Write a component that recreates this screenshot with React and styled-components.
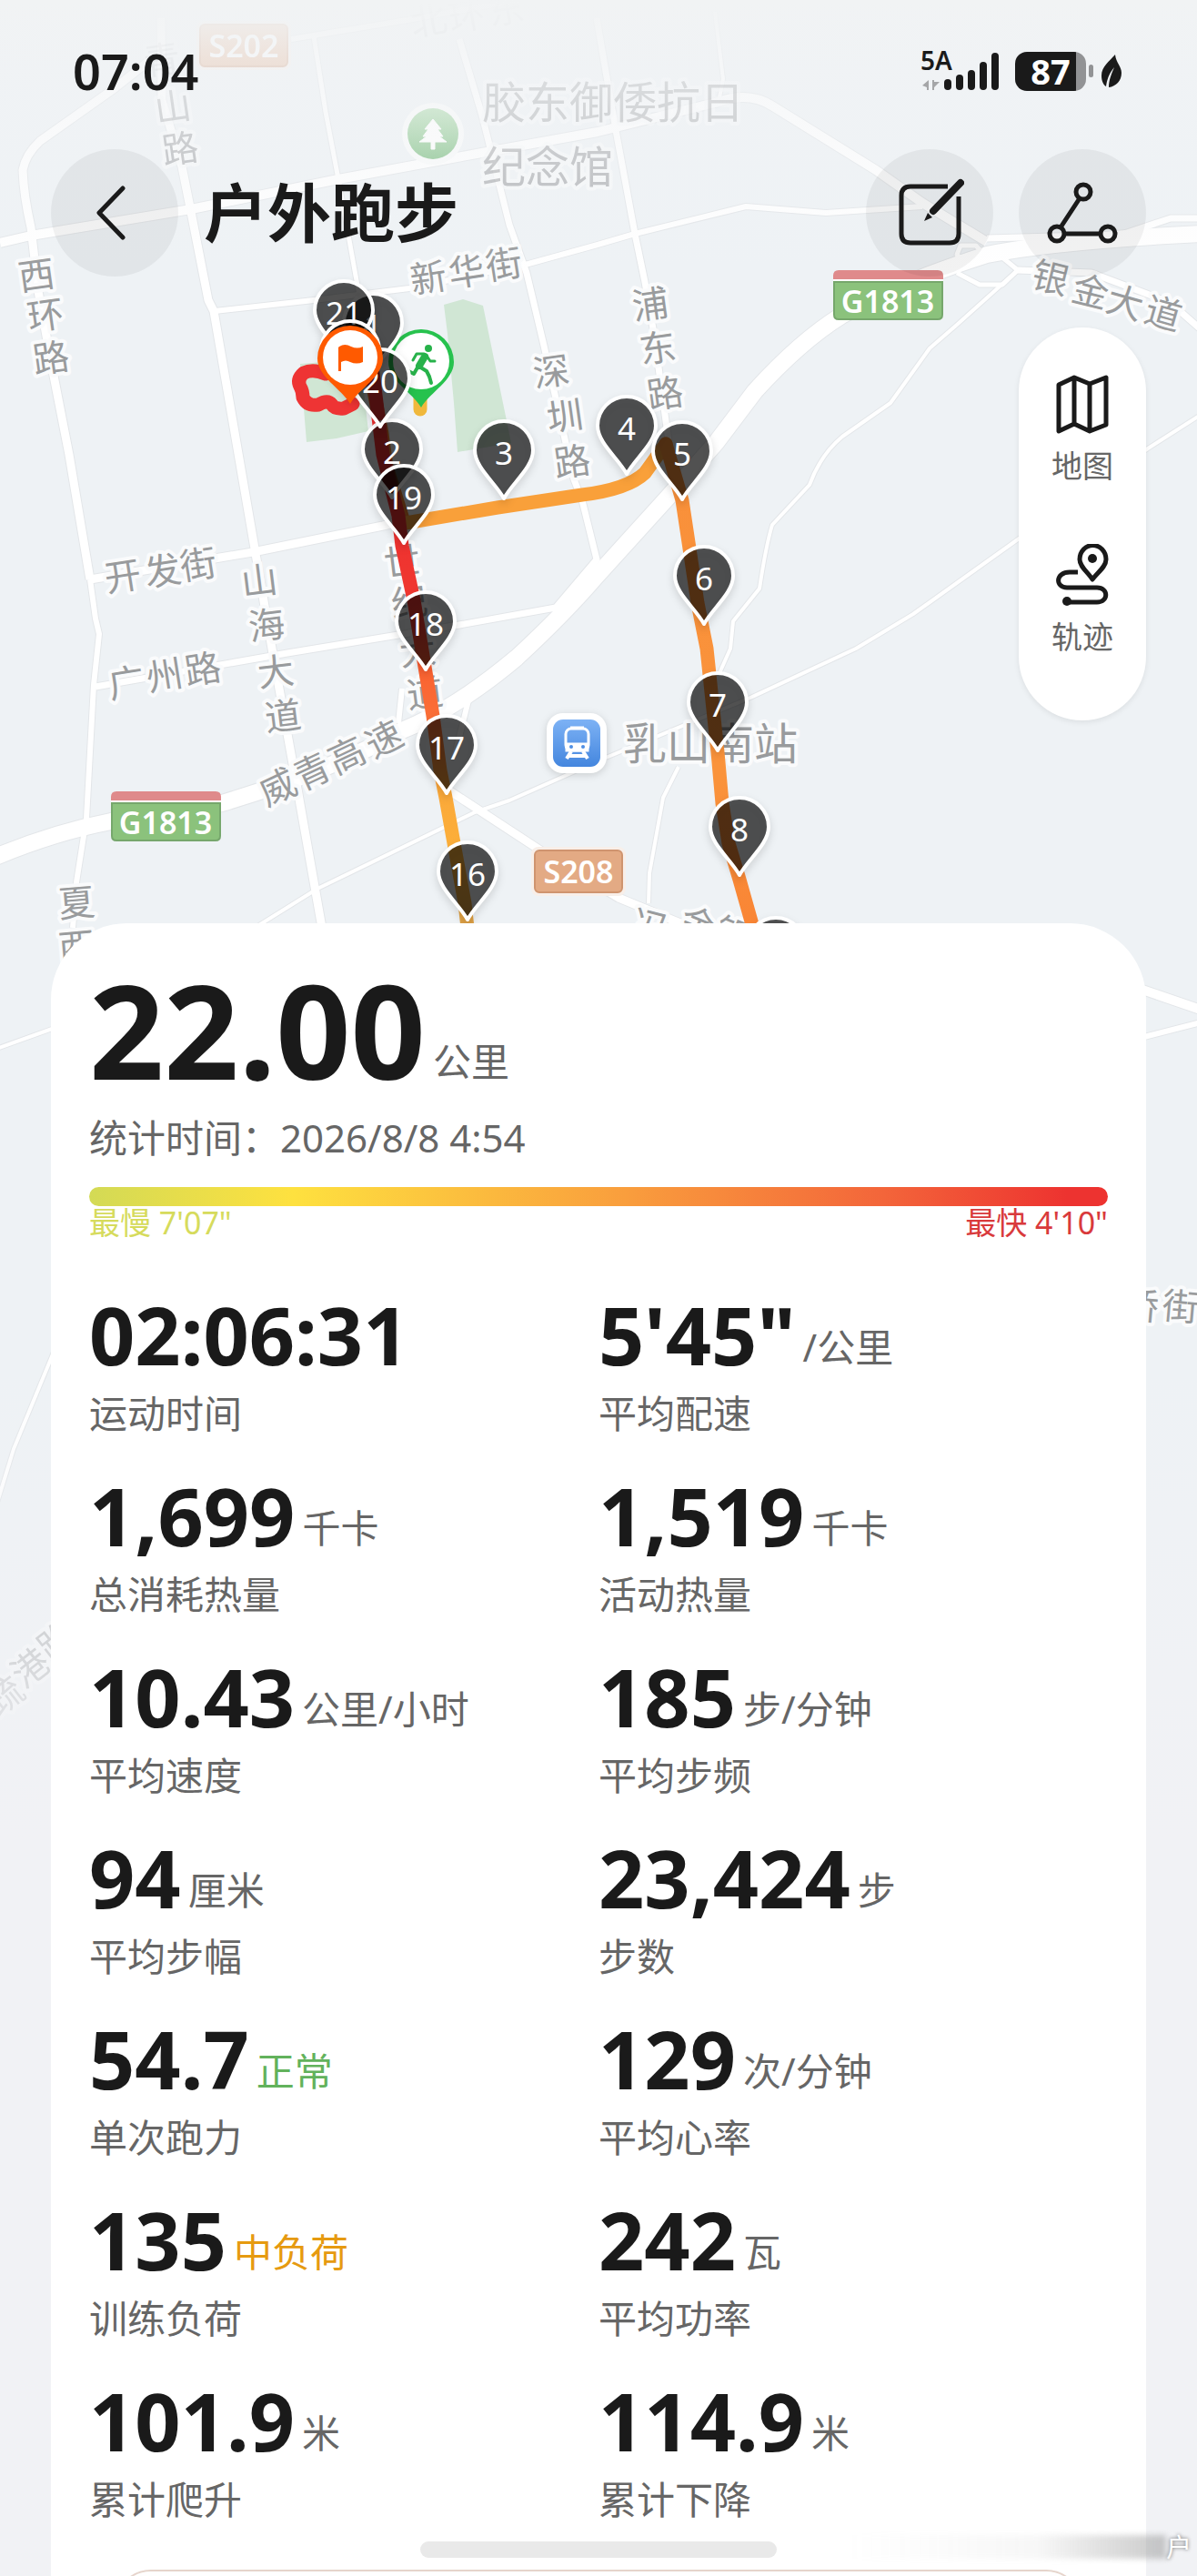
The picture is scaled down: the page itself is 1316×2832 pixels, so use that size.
import React from "react";
import styled, { createGlobalStyle } from "styled-components";

const GlobalStyle = createGlobalStyle`
  * {
    box-sizing: border-box;
  }

  body {
    margin: 0;
    background: #f1f2f5;
    color: #1a1a1a;
    font-family: "Noto Sans", "Noto Sans CJK SC", sans-serif;
  }

  button {
    border: 0;
    padding: 0;
    color: inherit;
    font-family: inherit;
    cursor: pointer;
  }
`;

const Page = styled.main`
  position: relative;
  display: flex;
  flex-direction: column;
  height: 100vh;
  overflow: hidden;
`;

/* map backdrop */

const MapSvg = styled.svg`
  position: absolute;
  top: 0;
  left: 0;
  width: 100%;
  height: auto;
`;

const MapText = styled.text`
  font-size: ${(props) => props.$size || 40}px;
  font-weight: ${(props) => props.$weight || 400};
  fill: ${(props) => props.$color || "#999b9d"};
  stroke: ${(props) => props.$halo || "#fafbfc"};
  stroke-width: ${(props) => (props.$halo === "none" ? 0 : 8)}px;
  stroke-linejoin: round;
  paint-order: stroke;
  text-anchor: ${(props) => props.$anchor || "middle"};
`;

const PinShape = styled.path`
  fill: rgba(0, 0, 0, 0.65);
  stroke: #fff;
  stroke-width: 4px;
  stroke-linejoin: round;
  filter: drop-shadow(0 4px 4px rgba(0, 0, 0, 0.15));
`;

const roads = [
  { w: 9, d: "M177 20L178 110L200 183L210 233L229 330L235 342L280 603L299 713L316 807L328 873L354 1020" },
  { w: 9, d: "M165 66L126 97L44 155Q28 170 25 187Q26 215 34 250L42 320L59 413L76 500L99 637" },
  { w: 6, d: "M99 637L105 680L109 697L103 753L95 900L84 970L80 1020" },
  { w: 10, d: "M0 267L34 259L210 230L372 197L535 167L657 145L790 112Q824 100 850 117L963 187L1014 223L1085 266" },
  { w: 5, d: "M345 40L358 123L372 197L391 303L396 330" },
  { w: 7, d: "M505 43L530 127L560 247L579 300L598 380L631 527L640 550L656 615L611 668L505 687L316 718L105 755" },
  { w: 6, d: "M320 43L442 23L570 0" },
  { w: 6, d: "M236 342L345 330L450 317L581 290L657 269L698 257L820 227L908 234L1014 227" },
  { w: 7, d: "M656 20L664 67L677 143L698 257L709 310L719 367L735 485" },
  { w: 4, d: "M786 13L795 87L790 112" },
  { w: 18, d: "M-5 942Q60 915 122 903Q200 890 244 883Q370 845 442 803Q500 780 568 723Q620 675 656 633L734 547L787 487L830 430Q880 375 925 347Q990 310 1085 280Q1160 265 1320 257" },
  { w: 7, d: "M1085 262L1233 258L1287 240L1320 240" },
  { w: 4, d: "M1119 297L1052 357L1022 383L979 443L926 480Q902 500 890 533L849 577Q842 600 835 647L806 683L803 713L791 740" },
  { w: 5, d: "M1052 300L1077 313L1102 313L1119 297L1102 283M1058 286L1052 280L1056 270L1073 270L1080 278" },
  { w: 7, d: "M1119 297L1200 300L1287 333L1320 362" },
  { w: 4, d: "M1320 456L1262 493L1119 593L1004 675L941 713L825 767L666 833L560 880L522 893L349 977L280 1020" },
  { w: 4, d: "M746 843L729 877L714 960L713 993" },
  { w: 9, d: "M492 868L602 940L680 987L760 1020" },
  { w: 6, d: "M442 757L438 795M515 770L500 830" },
  { w: 9, d: "M99 637L278 607L421 578L446 572" },
  { w: 4, d: "M-4 1153L60 1130M60 1484L15 1593L-4 1655" },
  { w: 10, d: "M1250 1086L1320 1110" },
  { w: 6, d: "M1250 1142L1320 1124" },
];

// [text, x, y, rotation, opacity]
const roadLabels = [
  ["青", 178, 65, -8, 0.25],
  ["山", 190, 117, -8, 0.6],
  ["路", 198, 163, -8, 0.7],
  ["北", 471, 22, -10, 0.25],
  ["环", 513, 17, -10, 0.25],
  ["东", 556, 10, -10, 0.25],
  ["西", 40, 302, -8],
  ["环", 50, 346, -8],
  ["路", 56, 393, -8],
  ["新", 471, 305, -9],
  ["华", 513, 298, -9],
  ["街", 554, 290, -9],
  ["浦", 715, 334, -8],
  ["东", 723, 382, -8],
  ["路", 731, 432, -8],
  ["深", 606, 408, -8],
  ["圳", 621, 457, -8],
  ["路", 629, 507, -8],
  ["开", 135, 633, -9],
  ["发", 179, 627, -9],
  ["街", 218, 620, -9],
  ["广", 139, 750, -9],
  ["州", 181, 742, -9],
  ["路", 223, 735, -9],
  ["山", 285, 638, -7],
  ["海", 293, 687, -7],
  ["大", 303, 738, -7],
  ["道", 311, 787, -7],
  ["世", 442, 617, -7],
  ["纪", 450, 662, -7],
  ["大", 459, 715, -7],
  ["道", 467, 762, -7],
  ["威", 305, 865, -25],
  ["青", 343, 848, -25],
  ["高", 381, 830, -25],
  ["速", 422, 812, -27],
  ["夏", 84, 992, -5],
  ["西", 84, 1040, -5],
  ["冯", 715, 1018, 15],
  ["金", 768, 1016, 22],
  ["银", 806, 1027, 22],
  ["银", 1155, 305, 14],
  ["金", 1199, 320, 14],
  ["大", 1237, 332, 16],
  ["道", 1279, 344, 16],
  ["桥", 1254, 1435, 5],
  ["街", 1298, 1436, 5],
  ["疏", 5, 1864, -38, 0.7],
  ["港", 33, 1833, -38, 0.8],
  ["路", 62, 1804, -38, 0.8],
];

// pins in paint order, x and y are the tip
const pins = [
  [1, 410, 408],
  [2, 431, 547],
  [3, 554, 548],
  [4, 689, 521],
  [5, 750, 549],
  [6, 774, 686],
  [7, 789, 825],
  [8, 813, 962],
  [9, 853, 1094],
  [16, 514, 1011],
  [17, 491, 872],
  [18, 468, 736],
  [19, 444, 597],
  [20, 418, 469],
  [21, 378, 394],
];

const pinPath =
  "M0 0C-9 -17 -32 -34 -32 -53A32 32 0 0 1 32 -53C32 -34 9 -17 0 0Z";
const markerPath =
  "M0 0C-10 -17 -36 -30 -36 -50A36 36 0 0 1 36 -50C36 -30 10 -17 0 0Z";

function Pin({ n, x, y }) {
  return (
    <g transform={`translate(${x} ${y})`}>
      <PinShape d={pinPath} />
      <MapText y="-37" $size={35} $color="#fff" $halo="none">
        {n}
      </MapText>
    </g>
  );
}

function Shield({ x, y, children, opacity = 1 }) {
  return (
    <g transform={`translate(${x} ${y})`} opacity={opacity}>
      <rect x="-3" y="-3" width="104" height="54" rx="8" fill="#f8efe9" />
      <rect x="1" y="1" width="96" height="46" rx="5" fill="#e3aa84" stroke="#cf946f" strokeWidth="2" />
      <MapText x="49" y="37" $size={34} $weight={600} $color="#fff" $halo="none">
        {children}
      </MapText>
    </g>
  );
}

function Expressway({ x, y }) {
  return (
    <g transform={`translate(${x} ${y})`}>
      <path d="M0 12V6Q0 0 6 0H115Q121 0 121 6V12Z" fill="#df8a8b" />
      <rect y="10" width="121" height="3" fill="#fff" />
      <path d="M1 13H120V49Q120 54 115 54H6Q1 54 1 49Z" fill="#8bc27c" stroke="#76a76c" strokeWidth="2" />
      <MapText x="60" y="47" $size={34} $weight={600} $color="#fff" $halo="none">
        G1813
      </MapText>
    </g>
  );
}

function RouteMap() {
  return (
    <MapSvg viewBox="0 0 1316 2832" aria-hidden="true">
      <defs>
        <linearGradient id="topFade" x1="0" y1="0" x2="0" y2="1">
          <stop offset="0" stopColor="#f1f3f4" stopOpacity="1" />
          <stop offset="0.3" stopColor="#f1f3f5" stopOpacity="0.6" />
          <stop offset="1" stopColor="#f1f3f5" stopOpacity="0" />
        </linearGradient>
        <linearGradient id="bottomFade" x1="0" y1="0" x2="0" y2="1">
          <stop offset="0" stopColor="#f1f2f5" stopOpacity="0" />
          <stop offset="1" stopColor="#f1f2f5" stopOpacity="1" />
        </linearGradient>
        <linearGradient id="westLeg" gradientUnits="userSpaceOnUse" x1="0" y1="560" x2="0" y2="1015">
          <stop offset="0" stopColor="#ee3030" />
          <stop offset="0.28" stopColor="#f03a30" />
          <stop offset="0.4" stopColor="#fa6432" />
          <stop offset="0.52" stopColor="#fa7038" />
          <stop offset="0.68" stopColor="#fba93a" />
          <stop offset="0.85" stopColor="#fcb03a" />
          <stop offset="1" stopColor="#dda045" />
        </linearGradient>
        <linearGradient id="eastLeg" gradientUnits="userSpaceOnUse" x1="0" y1="480" x2="0" y2="1015">
          <stop offset="0" stopColor="#f9903a" />
          <stop offset="0.7" stopColor="#fa933b" />
          <stop offset="1" stopColor="#f98535" />
        </linearGradient>
        <linearGradient id="rail" x1="0" y1="0" x2="0" y2="1">
          <stop offset="0" stopColor="#7db2f5" />
          <stop offset="1" stopColor="#4486de" />
        </linearGradient>
        <linearGradient id="park" x1="0" y1="0" x2="0" y2="1">
          <stop offset="0" stopColor="#b0dbb0" />
          <stop offset="1" stopColor="#80bf85" />
        </linearGradient>
      </defs>

      <rect width="1316" height="2832" fill="#eef2f5" />
      <path d="M488 335L509 329L531 336L562 487L503 497L499 443L492 367Z" fill="#d0e6d4" />
      <path d="M330 400L337 486L370 482L405 474L396 395Z" fill="#d0e6d4" />

      <g fill="none" strokeLinejoin="round">
        {roads.map((road) => (
          <path key={road.d} d={road.d} stroke="#e3e6e9" strokeWidth={road.w + 2} />
        ))}
        {roads.map((road) => (
          <path key={road.d} d={road.d} stroke="#fff" strokeWidth={road.w} />
        ))}
      </g>

      {roadLabels.map(([text, x, y, angle, opacity = 1]) => (
        <g key={`${x}-${y}`} transform={`translate(${x} ${y}) rotate(${angle})`} opacity={opacity}>
          <MapText y="15">{text}</MapText>
        </g>
      ))}

      <g opacity="0.65">
        <MapText x="530" y="130" $size={48} $anchor="start">
          胶东御倭抗日
        </MapText>
      </g>
      <g opacity="0.7">
        <MapText x="530" y="201" $size={48} $anchor="start">
          纪念馆
        </MapText>
      </g>
      <MapText x="685" y="835" $size={48} $anchor="start">
        乳山南站
      </MapText>

      <Shield x={219} y={26} opacity={0.8}>
        S202
      </Shield>
      <Shield x={587} y={934}>S208</Shield>
      <Expressway x={916} y={297} />
      <Expressway x={122} y={870} />

      <g transform="translate(476 147)">
        <circle r="34" fill="#fafbfb" />
        <circle r="28" fill="url(#park)" />
        <path
          d="M0 -16L9 -5H5L11 3H7L15 9H2V17H-2V9H-15L-7 3H-11L-5 -5H-9Z"
          fill="#fff"
          stroke="#fff"
          strokeWidth="1"
          strokeLinejoin="round"
        />
      </g>

      <g transform="translate(608 791)">
        <rect x="-7" y="-7" width="66" height="66" rx="18" fill="#fff" filter="drop-shadow(0 2px 4px rgba(0,0,0,.15))" />
        <rect width="52" height="52" rx="11" fill="url(#rail)" />
        <rect x="14" y="10" width="25" height="24" rx="6" fill="none" stroke="#fff" strokeWidth="3" />
        <path d="M19 9H34M15 27H38V34H15Z" fill="#fff" stroke="#fff" strokeWidth="3" />
        <circle cx="20" cy="30" r="2" fill="#4f8fe4" />
        <circle cx="33" cy="30" r="2" fill="#4f8fe4" />
        <path d="M20 35L15 43M33 35L38 43M18 40H35" stroke="#fff" strokeWidth="4" />
      </g>

      <rect width="1316" height="300" fill="url(#topFade)" />
      <rect y="1500" width="1316" height="520" fill="url(#bottomFade)" />
      <rect y="2020" width="1316" height="812" fill="#f1f2f5" />

      <g fill="none" strokeWidth="15" strokeLinejoin="round" strokeLinecap="round">
        <path
          d="M358 411Q344 405 334 410Q326 417 330 425Q333 430 333 437Q338 447 350 445Q360 439 365 445Q368 450 378 449L388 444"
          stroke="#ee3434"
        />
        <path d="M462 430V450" stroke="#f0b83c" />
        <path d="M410 425L420 477L425 513L444 574" stroke="#f08330" />
        <path d="M440 576L547 558L640 544Q690 538 709 520L732 488" stroke="#f9a03a" />
        <path d="M732 488L750 550L758 603L767 663L777 713L784 780L789 827L794 883L801 927L813 967L828 1020" stroke="url(#eastLeg)" />
        <path d="M410 410L421 500L438 567L442 600L455 660L467 733L476 787L484 847L490 877L499 927L511 993L514 1020" stroke="url(#westLeg)" />
      </g>

      <g transform="translate(463 448)">
        <path d={markerPath} fill="#27c24e" />
        <circle cy="-51" r="31" fill="#fff" />
        <g fill="none" stroke="#27b24a" strokeLinecap="round" strokeLinejoin="round">
          <path d="M4 -56L-2 -46" strokeWidth="8" />
          <path d="M3 -59L-5 -59L-9 -52M6 -57L10 -51L15 -51" strokeWidth="3" />
          <path d="M-2 -45L6 -40L9 -34L11 -27M-4 -44L-8 -37L-14 -40" strokeWidth="4" />
        </g>
        <circle cx="8" cy="-65" r="4" fill="#27b24a" />
      </g>

      {pins.map(([n, x, y]) => (
        <Pin key={n} n={n} x={x} y={y} />
      ))}
      <g transform="translate(385 438)">
        <PinShape d={pinPath} />
      </g>

      <g transform="translate(385 444)">
        <path d={markerPath} fill="#ff5a00" />
        <circle cy="-51" r="30" fill="#fff" />
        <path d="M-12 -63Q-6 -67 1 -63Q8 -60 14 -63V-46Q7 -43 0 -46Q-5 -49 -10 -46V-36H-13V-62Z" fill="#ff5a00" />
      </g>
    </MapSvg>
  );
}

/* status bar */

const StatusBar = styled.div`
  position: relative;
  display: flex;
  flex-shrink: 0;
  align-items: center;
  justify-content: space-between;
  height: 156px;
  padding: 0 82px 0 80px;
`;

const Clock = styled.time`
  font-size: 54px;
  font-weight: 600;
  line-height: 60px;
`;

const StatusIcons = styled.div`
  display: flex;
  align-items: center;
`;

const SignalText = styled.text`
  font-size: 28px;
  font-weight: 600;
`;

const Battery = styled.span`
  width: 78px;
  height: 43px;
  margin-left: 16px;
  border-radius: 13px;
  background: linear-gradient(90deg, #1a1a1a 86%, #929395 86%);
  color: #fff;
  font-size: 38px;
  font-weight: 700;
  line-height: 43px;
  text-align: center;
`;

const BatteryNub = styled.span`
  width: 5px;
  height: 14px;
  margin: 0 8px 0 3px;
  border-radius: 3px;
  background: #929395;
`;

/* header */

const Header = styled.header`
  position: relative;
  display: flex;
  flex-shrink: 0;
  align-items: center;
  gap: 28px;
  margin-top: 8px;
  padding: 0 56px;
`;

const RoundButton = styled.button`
  display: flex;
  align-items: center;
  justify-content: center;
  width: 140px;
  height: 140px;
  border-radius: 50%;
  background: rgba(0, 0, 0, 0.05);
`;

const Title = styled.h1`
  flex: 1;
  margin: 0;
  font-size: 70px;
  font-weight: 700;
  line-height: 88px;
`;

/* map tools */

const Tools = styled.nav`
  position: relative;
  display: flex;
  flex-direction: column;
  flex-shrink: 0;
  align-self: flex-end;
  gap: 66px;
  width: 140px;
  margin: 56px 56px 0 0;
  padding: 50px 0 72px;
  border-radius: 70px;
  background: #fff;
  box-shadow: 0 2px 6px rgba(0, 0, 0, 0.08);
`;

const Tool = styled.button`
  display: flex;
  flex-direction: column;
  align-items: center;
  gap: 14px;
  background: none;
  color: #1a1a1a;
`;

const ToolLabel = styled.span`
  color: #666;
  font-size: 34px;
  line-height: 40px;
`;

/* sheet */

const Sheet = styled.section`
  position: relative;
  flex: 1 0 auto;
  margin: 223px 56px 0;
  padding: 44px 42px 0;
  border-radius: 84px 84px 0 0;
  background: #fff;
`;

const Amount = styled.div`
  display: flex;
  align-items: flex-end;
  gap: 8px;
`;

const Distance = styled.strong`
  font-size: 144px;
  font-weight: 700;
  line-height: 144px;
`;

const Value = styled.strong`
  font-size: 88px;
  font-weight: 700;
  line-height: 88px;
`;

const Unit = styled.span`
  padding-bottom: ${(props) => (props.$large ? 12 : 6)}px;
  color: ${(props) => props.$color || "#666"};
  font-size: 42px;
  line-height: 48px;
`;

const Recorded = styled.p`
  margin: 24px 0 30px;
  color: #666;
  font-size: 42px;
  line-height: 48px;
`;

const PaceBar = styled.div`
  height: 21px;
  border-radius: 11px;
  background: linear-gradient(
    90deg,
    #d3da55,
    #fee13f 20%,
    #f99d3d 53%,
    #f3653a 78%,
    #ed3330 96%
  );
`;

const PaceRange = styled.div`
  display: flex;
  justify-content: space-between;
  margin-bottom: 60px;
  font-size: 34px;
  line-height: 37px;
`;

const Pace = styled.span`
  color: ${(props) => (props.$fast ? "#d93a3c" : "#d6db5c")};
`;

const Stats = styled.dl`
  display: grid;
  grid-template-columns: 1fr 1fr;
  row-gap: 44px;
  margin: 0;
`;

const Stat = styled.div`
  display: flex;
  flex-direction: column-reverse;
  gap: 19px;
`;

const StatLabel = styled.dt`
  color: #666;
  font-size: 42px;
  line-height: 48px;
`;

const StatAmount = styled(Amount).attrs({ as: "dd" })`
  margin: 0;
`;

const NextCard = styled.div`
  height: 80px;
  margin: 53px 28px 0;
  border: 2px solid #e6d5cc;
  border-radius: 40px;
`;

const HomeBar = styled.div`
  position: absolute;
  bottom: 20px;
  left: 50%;
  width: 392px;
  height: 18px;
  margin-left: -196px;
  border-radius: 9px;
  background: #e9e9e9;
`;

const Watermark = styled.div`
  position: absolute;
  right: 0;
  bottom: 14px;
  display: flex;
  align-items: center;
`;

const WatermarkShade = styled.span`
  width: 350px;
  height: 26px;
  background: linear-gradient(90deg, rgba(150, 150, 150, 0), rgba(150, 150, 150, 0.08) 60%, rgba(150, 150, 150, 0.5));
  filter: blur(3px);
`;

const WatermarkText = styled.span`
  width: 34px;
  color: #fff;
  font-size: 28px;
  line-height: 36px;
  text-shadow: 0 0 4px rgba(0, 0, 0, 0.6);
`;

const stats = [
  { label: "运动时间", value: "02:06:31" },
  { label: "平均配速", value: "5'45\"", unit: "/公里" },
  { label: "总消耗热量", value: "1,699", unit: "千卡" },
  { label: "活动热量", value: "1,519", unit: "千卡" },
  { label: "平均速度", value: "10.43", unit: "公里/小时" },
  { label: "平均步频", value: "185", unit: "步/分钟" },
  { label: "平均步幅", value: "94", unit: "厘米" },
  { label: "步数", value: "23,424", unit: "步" },
  { label: "单次跑力", value: "54.7", unit: "正常", color: "#62b25c" },
  { label: "平均心率", value: "129", unit: "次/分钟" },
  { label: "训练负荷", value: "135", unit: "中负荷", color: "#e69a10" },
  { label: "平均功率", value: "242", unit: "瓦" },
  { label: "累计爬升", value: "101.9", unit: "米" },
  { label: "累计下降", value: "114.9", unit: "米" },
];

function SignalIcon() {
  return (
    <svg width="88" height="44" viewBox="0 0 88 44" fill="#1a1a1a">
      <SignalText x="0" y="21">
        5A
      </SignalText>
      <path d="M9 32V43H7V40L2 38ZM13 32V43H15V40L21 34H15V32Z" fill="#a5a6a8" />
      <rect x="26" y="31" width="8" height="12" rx="4" />
      <rect x="39" y="26" width="8" height="17" rx="4" />
      <rect x="52" y="21" width="8" height="22" rx="4" />
      <rect x="65" y="12" width="8" height="31" rx="4" />
      <rect x="78" y="2" width="8" height="41" rx="4" />
    </svg>
  );
}

function LeafIcon() {
  return (
    <svg width="24" height="38" viewBox="0 0 24 38">
      <path d="M16 1C10 8 1 14 1 24C1 30 3 34 6 36C7 29 9 22 15 15C12 22 9 29 9 37C17 36 23 30 23 21C23 14 17 10 16 1Z" fill="#1a1a1a" />
    </svg>
  );
}

function BackIcon() {
  return (
    <svg width="60" height="64" viewBox="0 0 60 64" fill="none" stroke="#1a1a1a" strokeWidth="5" strokeLinecap="round" strokeLinejoin="round">
      <path d="M39 5L13 32L39 59" />
    </svg>
  );
}

function EditIcon() {
  return (
    <svg width="76" height="76" viewBox="0 0 76 76" fill="none" stroke="#1a1a1a" strokeWidth="5">
      <path d="M58 9H17Q7 9 7 19V61Q7 71 17 71H60Q70 71 70 61V20" />
      <path d="M72 5L42 36" strokeWidth="8" strokeLinecap="round" />
      <path d="M36 38L41 43L32 47Z" fill="#1a1a1a" stroke="none" />
    </svg>
  );
}

function ShareIcon() {
  return (
    <svg width="80" height="72" viewBox="0 0 80 72" fill="none" stroke="#1a1a1a" strokeWidth="5">
      <circle cx="41" cy="13" r="8" />
      <circle cx="12" cy="59" r="8" />
      <circle cx="68" cy="59" r="8" />
      <path d="M37 20L16 52M20 59H60" />
    </svg>
  );
}

function MapIcon() {
  return (
    <svg width="68" height="68" viewBox="0 0 68 68" fill="none" stroke="currentColor" strokeWidth="5" strokeLinejoin="round">
      <path d="M8 13L25 5L42 12L60 5V57L42 64L25 56L8 64ZM25 5V56M42 12V64" />
    </svg>
  );
}

function TrackIcon() {
  return (
    <svg width="68" height="68" viewBox="0 0 68 68" fill="none" stroke="currentColor" strokeWidth="5">
      <path d="M45 39C40 31 31 25 31 17A14 15 0 0 1 60 17C60 25 51 31 45 39Z" strokeLinejoin="round" />
      <circle cx="45" cy="16" r="5" fill="currentColor" stroke="none" />
      <path d="M29 31H20C4 31 4 48 17 48H50C63 48 63 64 50 64H19" />
      <circle cx="17" cy="63" r="5" fill="currentColor" stroke="none" />
    </svg>
  );
}

export default function App() {
  return (
    <>
      <GlobalStyle />
      <Page>
        <RouteMap />

        <StatusBar>
          <Clock>07:04</Clock>
          <StatusIcons>
            <SignalIcon />
            <Battery>87</Battery>
            <BatteryNub />
            <LeafIcon />
          </StatusIcons>
        </StatusBar>

        <Header>
          <RoundButton aria-label="返回">
            <BackIcon />
          </RoundButton>
          <Title>户外跑步</Title>
          <RoundButton aria-label="编辑">
            <EditIcon />
          </RoundButton>
          <RoundButton aria-label="分享">
            <ShareIcon />
          </RoundButton>
        </Header>

        <Tools>
          <Tool>
            <MapIcon />
            <ToolLabel>地图</ToolLabel>
          </Tool>
          <Tool>
            <TrackIcon />
            <ToolLabel>轨迹</ToolLabel>
          </Tool>
        </Tools>

        <Sheet>
          <Amount>
            <Distance>22.00</Distance>
            <Unit $large>公里</Unit>
          </Amount>
          <Recorded>统计时间：2026/8/8 4:54</Recorded>
          <PaceBar />
          <PaceRange>
            <Pace>最慢 7'07"</Pace>
            <Pace $fast>最快 4'10"</Pace>
          </PaceRange>

          <Stats>
            {stats.map((stat) => (
              <Stat key={stat.label}>
                <StatLabel>{stat.label}</StatLabel>
                <StatAmount>
                  <Value>{stat.value}</Value>
                  {stat.unit && <Unit $color={stat.color}>{stat.unit}</Unit>}
                </StatAmount>
              </Stat>
            ))}
          </Stats>
          <NextCard />
        </Sheet>

        <HomeBar />
        <Watermark>
          <WatermarkShade />
          <WatermarkText>户</WatermarkText>
        </Watermark>
      </Page>
    </>
  );
}
